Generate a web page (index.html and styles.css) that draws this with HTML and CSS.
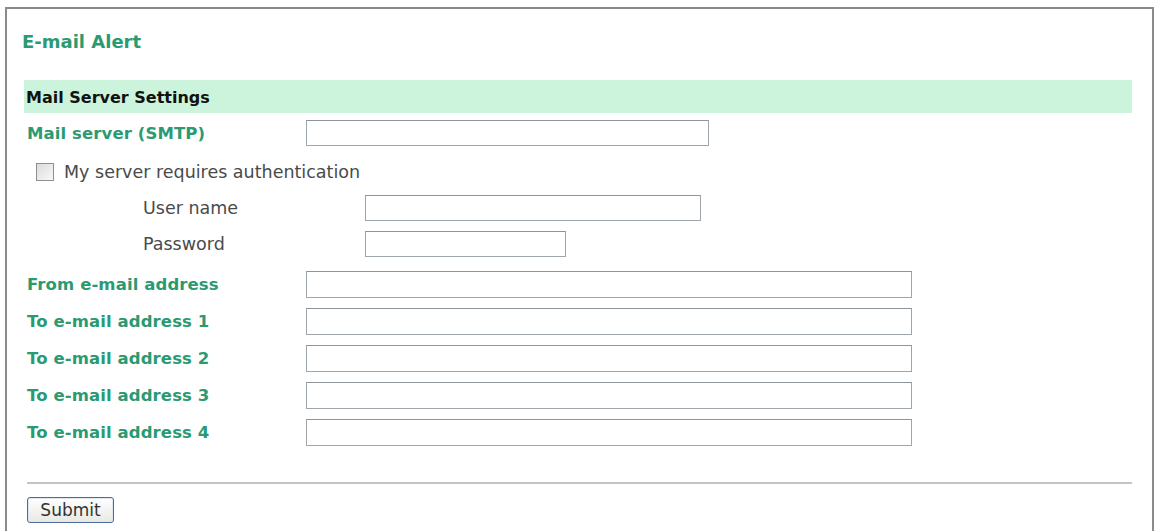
FILE: index.html
```
<!DOCTYPE html>
<html lang="en">

<head>
  <meta charset="UTF-8">
  <title>E-mail Alert</title>
  <link rel="stylesheet" href="styles.css">
</head>

<body>
  <div class="cadre">
    <h2 class="titre">E-mail Alert</h2>

    <form class="alerte" onsubmit="return false">
      <div class="bandeau">Mail Server Settings</div>

      <div class="ligne smtp">
        <label class="etiquette">Mail server (SMTP)</label>
        <input type="text" class="champ champ-smtp">
      </div>

      <div class="ligne coche">
        <label class="auth"><span class="case"></span>My server requires authentication</label>
      </div>

      <div class="ligne sous">
        <label class="etiquette-sous">User name</label>
        <input type="text" class="champ champ-user">
      </div>
      <div class="ligne sous">
        <label class="etiquette-sous">Password</label>
        <input type="password" class="champ champ-pass">
      </div>

      <div class="ligne mail premier">
        <label class="etiquette">From e-mail address</label>
        <input type="text" class="champ champ-mail">
      </div>
      <div class="ligne mail">
        <label class="etiquette">To e-mail address 1</label>
        <input type="text" class="champ champ-mail">
      </div>
      <div class="ligne mail">
        <label class="etiquette">To e-mail address 2</label>
        <input type="text" class="champ champ-mail">
      </div>
      <div class="ligne mail">
        <label class="etiquette">To e-mail address 3</label>
        <input type="text" class="champ champ-mail">
      </div>
      <div class="ligne mail">
        <label class="etiquette">To e-mail address 4</label>
        <input type="text" class="champ champ-mail">
      </div>

      <hr class="separateur">
      <button class="envoyer">Submit</button>
    </form>
  </div>
</body>

</html>
```

FILE: styles.css
```
body {
  margin: 0;
  font-family: "DejaVu Sans", Verdana, sans-serif;
  background-color: #ffffff;
  color: #444444;
}

.cadre {
  margin: 7px 2px 0 5px;
  border: 2px solid #8a8a8a;
  border-bottom: none;
  height: 540px;
  padding: 0 20px 0 17px;
}

.titre {
  margin: 0;
  padding: 23px 0 0 0;
  font-size: 18px;
  line-height: 20px;
  color: #2b9a72;
  margin-left: -2px;
}

.alerte {
  margin-top: 28px;
}

.bandeau {
  height: 33px;
  line-height: 35px;
  background-color: #ccf3dc;
  color: #111111;
  font-weight: bold;
  font-size: 16px;
  padding-left: 2px;
}

.ligne {
  display: flex;
  align-items: center;
  height: 26px;
}

.smtp {
  margin-top: 7px;
}

.etiquette {
  width: 279px;
  flex-shrink: 0;
  padding-left: 3px;
  font-weight: bold;
  font-size: 16.5px;
  color: #2b9a72;
  letter-spacing: 0.1px;
}

.champ {
  height: 26px;
  box-sizing: border-box;
  border: 1px solid #9ea5ab;
  border-top-color: #8d949a;
  background-color: #ffffff;
  margin: 0;
  padding: 2px 4px;
}

.champ-smtp {
  width: 403px;
}

.coche {
  margin-top: 13px;
}

.auth {
  display: flex;
  align-items: center;
  padding-left: 12px;
  font-size: 17.5px;
  color: #4a4a4a;
}

.case {
  width: 16px;
  height: 16px;
  border: 1px solid #8e8f8f;
  background: linear-gradient(135deg, #dcdcdc, #f8f8f8);
  margin-right: 10px;
}

.sous {
  margin-top: 10px;
}

.etiquette-sous {
  width: 222px;
  flex-shrink: 0;
  padding-left: 119px;
  font-size: 17.5px;
  color: #4a4a4a;
}

.champ-user {
  width: 336px;
}

.champ-pass {
  width: 201px;
}

.mail {
  margin-top: 10.5px;
  height: 26.5px;
}

.mail .champ {
  height: 26.5px;
}

.premier {
  margin-top: 14px;
}

.champ-mail {
  width: 606px;
}

.separateur {
  border: none;
  border-top: 2px solid #c4c4c4;
  margin: 36px 0 0 3px;
}

.envoyer {
  margin: 13px 0 0 3px;
  width: 87px;
  height: 26px;
  padding: 0;
  font-family: "DejaVu Sans", Verdana, sans-serif;
  font-size: 17px;
  color: #333333;
  border: 1px solid #4c6c9c;
  border-radius: 3px;
  background: linear-gradient(#ffffff, #e8e8e4);
  box-shadow: inset 0 0 0 1px #dfe6f2;
}
```
